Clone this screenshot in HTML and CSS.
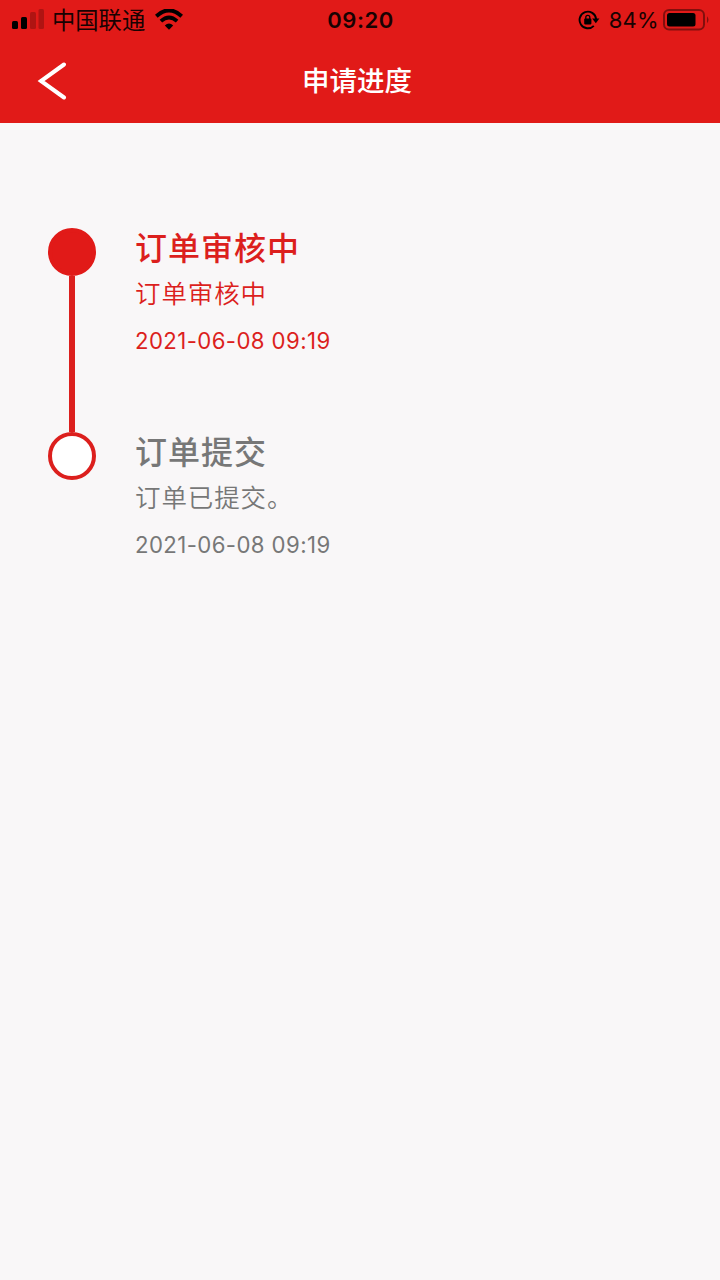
FILE: index.html
```html
<!DOCTYPE html>
<html lang="zh-CN">
<head>
  <meta charset="UTF-8">
  <meta name="viewport" content="width=device-width, initial-scale=1.0">
  <title>申请进度</title>
  <link rel="stylesheet" href="styles.css">
</head>
<body>
  <header class="header">
    <div class="status-bar">
      <div class="status-left">
        <svg class="signal" width="33" height="22" viewBox="0 0 33 22">
          <rect x="0" y="12" width="6" height="8" rx="1.5"/>
          <rect x="9" y="8" width="6" height="12" rx="1.5"/>
          <rect x="18" y="3" width="6" height="17" rx="1.5" opacity=".22"/>
          <rect x="26.5" y="0" width="5.5" height="20" rx="1.5" opacity=".22"/>
        </svg>
        <span class="carrier">中国联通</span>
        <svg class="wifi" width="28" height="22" viewBox="0 0 28 22">
          <path d="M1.3 7.2Q14-4.4 26.7 7.2" fill="none" stroke="#000" stroke-width="4"/>
          <path d="M5.9 12.2Q14 4.7 22.1 12.2" fill="none" stroke="#000" stroke-width="3.7"/>
          <path d="M9.8 16.6Q14 12.6 18.2 16.6L14 20.8Z"/>
        </svg>
      </div>
      <div class="clock">09:20</div>
      <div class="status-right">
        <svg class="lock" width="22" height="20" viewBox="0 0 22 20">
          <path d="M15.8 15.8A8.3 8.3 0 1 1 18.1 9" fill="none" stroke="#000" stroke-width="1.9"/>
          <path d="M14.2 8.4H21.4L17.8 13.2Z"/>
          <rect x="6.2" y="8.6" width="7.2" height="5.8" rx=".8"/>
          <path d="M7.8 9V7.3a2 2 0 0 1 4 0V9" fill="none" stroke="#000" stroke-width="1.3"/>
        </svg>
        <span class="percent">84%</span>
        <svg class="battery" width="46" height="22" viewBox="0 0 46 22">
          <rect x="1" y="1" width="40" height="19.5" rx="5" fill="none" stroke="#000" stroke-opacity=".42" stroke-width="2"/>
          <rect x="4" y="4" width="28.5" height="13.5" rx="2.5"/>
          <path d="M44 7.3q3 3.5 0 7z" opacity=".42"/>
        </svg>
      </div>
    </div>
    <div class="nav-bar">
      <svg class="back" width="30" height="38" viewBox="0 0 30 38">
        <path d="M27 2.5L4 19L27 35.5" fill="none" stroke="#fff" stroke-width="4" stroke-linecap="round"/>
      </svg>
      <div class="nav-title">申请进度</div>
    </div>
  </header>

  <main class="timeline">
    <div class="step active">
      <div class="track">
        <div class="dot"></div>
        <div class="line"></div>
      </div>
      <div class="content">
        <div class="title">订单审核中</div>
        <div class="desc">订单审核中</div>
        <div class="date">2021-06-08 09:19</div>
      </div>
    </div>
    <div class="step">
      <div class="track">
        <div class="dot"></div>
      </div>
      <div class="content">
        <div class="title">订单提交</div>
        <div class="desc">订单已提交。</div>
        <div class="date">2021-06-08 09:19</div>
      </div>
    </div>
  </main>
</body>
</html>
```
FILE: styles.css
```css
body {
  margin: 0;
  min-height: 100vh;
  background: #f9f7f8;
  font-family: Inter, "Noto Sans CJK SC", sans-serif;
}
.header {
  height: 123px;
  background: #e11a18;
}
.status-bar {
  display: grid;
  grid-template-columns: 1fr auto 1fr;
  align-items: center;
  height: 40px;
  padding: 0 11px 0 12px;
  color: #180202;
}
.status-left,
.status-right {
  display: flex;
  align-items: center;
}
.status-right {
  justify-content: flex-end;
}
.signal {
  margin-right: 7px;
}
.carrier {
  padding-top: 2px;
  font-size: 23.3px;
  line-height: 38px;
}
.wifi {
  margin-left: 10px;
}
.clock {
  font-size: 22px;
  font-weight: 600;
  letter-spacing: 0.5px;
}
.percent {
  margin: 0 4px 0 9px;
  font-size: 22px;
  letter-spacing: 0.3px;
}
.nav-bar {
  display: grid;
  grid-template-columns: 1fr auto 1fr;
  align-items: center;
  height: 81px;
  padding: 0 43px 0 37px;
}
.nav-title {
  padding-bottom: 4px;
  color: #fff;
  font-size: 27.5px;
  font-weight: 500;
}
.timeline {
  padding: 105px 48px 0;
}
.step {
  display: flex;
  height: 204px;
  color: #777;
}
.step.active {
  color: #dc1f1d;
}
.track {
  display: flex;
  flex-direction: column;
  align-items: center;
  width: 48px;
  margin-right: 38px;
}
.dot {
  box-sizing: border-box;
  flex: none;
  width: 48px;
  height: 48px;
  border: 4px solid #dc1f1d;
  border-radius: 50%;
  background: #fff;
}
.active .dot {
  border-color: #e11a18;
  background: #e11a18;
}
.line {
  flex: 1;
  width: 6px;
  background: #dc1f1d;
}
.content {
  padding: 1px 0 0 1px;
}
.title {
  font-size: 32px;
  font-weight: 500;
  line-height: 40px;
  letter-spacing: 1px;
}
.desc {
  margin-top: 5px;
  font-size: 25.5px;
  font-weight: 350;
  line-height: 40px;
  letter-spacing: 0.9px;
}
.date {
  margin-top: 11px;
  font-size: 22.2px;
  line-height: 32px;
  letter-spacing: 0.4px;
}
```
